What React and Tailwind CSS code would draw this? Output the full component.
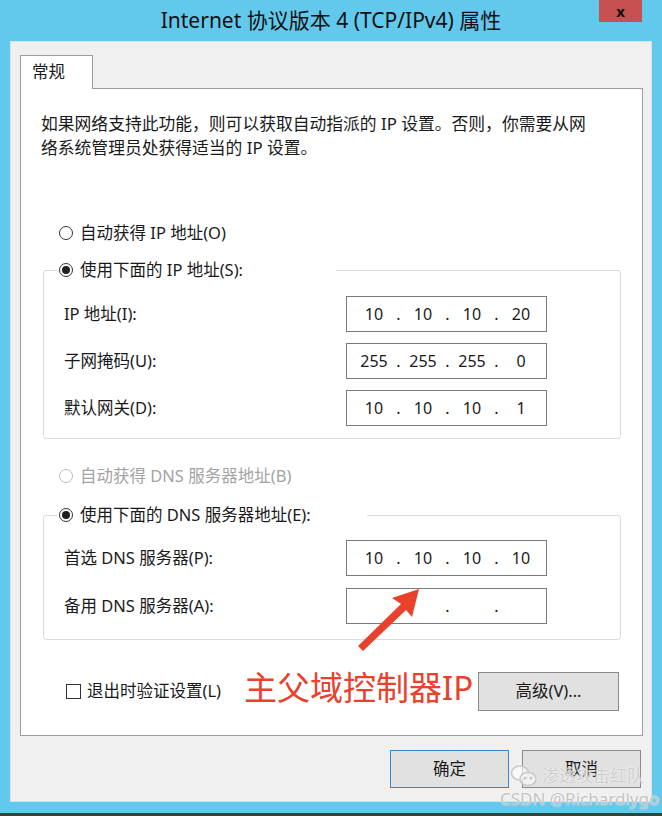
import React from "react";

const font = { fontFamily: "'Noto Sans', 'Noto Sans CJK SC', sans-serif" };

const Radio = ({ checked, disabled }) => (
  <span
    className={`flex h-[14px] w-[14px] shrink-0 items-center justify-center rounded-full border bg-white ${
      disabled ? "border-[#bcbcbc]" : "border-[#333333]"
    }`}
  >
    {checked && <span className="h-[8px] w-[8px] rounded-full bg-[#1f1f1f]" />}
  </span>
);

const IpBox = ({ parts }) => (
  <div className="flex h-[36px] w-[201px] items-center border border-[#7a7a7a] bg-white pl-[5px] text-[16px] text-[#1a1a1a]">
    {parts.map((p, i) => (
      <React.Fragment key={i}>
        <span className="w-[44px] text-center">{p}</span>
        {i < 3 && <span className="w-[5px] text-center">.</span>}
      </React.Fragment>
    ))}
  </div>
);

const Row = ({ label, parts }) => (
  <div className="flex items-center">
    <span className="w-[282px] text-[16.5px] text-[#1a1a1a]">{label}</span>
    <IpBox parts={parts} />
  </div>
);

const GroupBox = ({ legend, legendWidth, rows, pt, pb, gap }) => (
  <div className="ml-[22px] w-[578px]">
    <div className="relative z-10 ml-[14px] flex h-[22px] items-center gap-[7px] bg-white pl-[2px] text-[16.5px] text-[#1a1a1a]" style={{ width: legendWidth }}>
      <Radio checked />
      <span>{legend}</span>
    </div>
    <div
      className="-mt-[11px] flex flex-col rounded-[3px] border border-[#d7dde3] pl-[20px]"
      style={{ paddingTop: pt, paddingBottom: pb, gap }}
    >
      {rows.map((r) => (
        <Row key={r.label} label={r.label} parts={r.parts} />
      ))}
    </div>
  </div>
);

export default function App() {
  return (
    <div className="relative flex h-[816px] w-[662px] flex-col bg-[#62c9ec]" style={font}>
      {/* Title bar */}
      <div className="relative flex h-[41px] items-center justify-center">
        <span className="text-[21px] text-[#111]">Internet 协议版本 4 (TCP/IPv4) 属性</span>
        <div className="absolute right-[20px] top-0 flex h-[22px] w-[43px] items-center justify-center bg-[#c75050] text-[15px] font-bold text-[#111]">
          x
        </div>
      </div>

      {/* Client area */}
      <div className="mx-[10px] flex h-[761px] flex-col border border-[#d3e3ec] bg-[#f0f0f0] pl-[9px] pr-[9px]">
        <div className="mt-[13px] flex">
          <div className="relative z-10 -mb-px flex h-[34px] w-[73px] items-start border border-b-0 border-[#9a9da3] bg-white pl-[11px] pt-[4px] text-[16.5px] text-[#1a1a1a]">
            常规
          </div>
        </div>

        {/* Tab panel */}
        <div className="flex h-[648px] w-[623px] flex-col border border-[#9a9da3] bg-white">
          <p className="whitespace-nowrap pl-[20px] pt-[23px] text-[16.8px] leading-[24px] text-[#1a1a1a]">
            如果网络支持此功能，则可以获取自动指派的 IP 设置。否则，你需要从网
            <br />
            络系统管理员处获得适当的 IP 设置。
          </p>

          <div className="ml-[38px] mt-[62px] flex h-[22px] items-center gap-[7px] text-[16.5px] text-[#1a1a1a]">
            <Radio />
            <span>自动获得 IP 地址(O)</span>
          </div>

          <div className="mt-[15px]">
            <GroupBox
              legend="使用下面的 IP 地址(S):"
              legendWidth="279px"
              pt="25px"
              pb="12px"
              gap="11px"
              rows={[
                { label: "IP 地址(I):", parts: ["10", "10", "10", "20"] },
                { label: "子网掩码(U):", parts: ["255", "255", "255", "0"] },
                { label: "默认网关(D):", parts: ["10", "10", "10", "1"] },
              ]}
            />
          </div>

          <div className="ml-[38px] mt-[26px] flex h-[22px] items-center gap-[7px] text-[16.5px] text-[#a3a3a3]">
            <Radio disabled />
            <span>自动获得 DNS 服务器地址(B)</span>
          </div>

          <div className="mt-[17px]">
            <GroupBox
              legend="使用下面的 DNS 服务器地址(E):"
              legendWidth="310px"
              pt="24px"
              pb="15px"
              gap="12px"
              rows={[
                { label: "首选 DNS 服务器(P):", parts: ["10", "10", "10", "10"] },
                { label: "备用 DNS 服务器(A):", parts: ["", "", "", ""] },
              ]}
            />
          </div>

          <div className="mt-[32px] flex items-center justify-between pl-[45px] pr-[23px]">
            <div className="flex items-center gap-[6px] text-[16.5px] text-[#1a1a1a]">
              <span className="h-[15px] w-[15px] border border-[#333] bg-white" />
              <span>退出时验证设置(L)</span>
            </div>
            <button className="flex h-[39px] w-[141px] items-center justify-center border border-[#8a8a8a] bg-[#e1e1e1] text-[16.5px] text-[#1a1a1a]">
              高级(V)...
            </button>
          </div>
        </div>

        {/* Dialog buttons */}
        <div className="mt-[14px] flex justify-end gap-[13px] pr-[1px]">
          <button className="flex h-[38px] w-[119px] items-center justify-center border border-[#3d86c5] bg-[#e1e1e1] text-[16.5px] text-[#1a1a1a]">
            确定
          </button>
          <button className="flex h-[38px] w-[119px] items-center justify-center border border-[#8a8a8a] bg-[#e1e1e1] text-[16.5px] text-[#1a1a1a]">
            取消
          </button>
        </div>
      </div>

      <div className="mt-auto h-[3px] bg-[#3b3f44]" />

      {/* Annotation */}
      <span className="absolute left-[244px] top-[667px] text-[33px] leading-[42px] text-[#e8412c]">
        主父域控制器IP
      </span>
      <svg className="absolute left-[355px] top-[585px]" width="70" height="70" viewBox="0 0 70 70">
        <polygon points="64,4 37,13 46,19 3,61 8,66 51,25 57,32" fill="#e8412c" />
      </svg>

      {/* Watermark */}
      <div className="absolute left-[510px] top-[763px] flex items-center gap-[4px] text-[#c9c9c9]/90" style={{ textShadow: "0 0 2px #fff" }}>
        <svg width="28" height="24" viewBox="0 0 28 24" fill="none" stroke="#c9c9c9" strokeWidth="1.6">
          <ellipse cx="10" cy="9" rx="8.5" ry="7" fill="#fff" fillOpacity="0.6" />
          <ellipse cx="18" cy="15" rx="8" ry="6.5" fill="#fff" fillOpacity="0.6" />
          <circle cx="15" cy="14" r="0.8" fill="#c9c9c9" />
          <circle cx="21" cy="14" r="0.8" fill="#c9c9c9" />
        </svg>
        <span className="text-[17px]">渗透攻击红队</span>
      </div>
      <span className="absolute left-[500px] top-[786px] text-[17px] text-[#c4c4c4]" style={{ textShadow: "0 0 2px #fff" }}>
        CSDN @Richardlygo
      </span>
    </div>
  );
}
